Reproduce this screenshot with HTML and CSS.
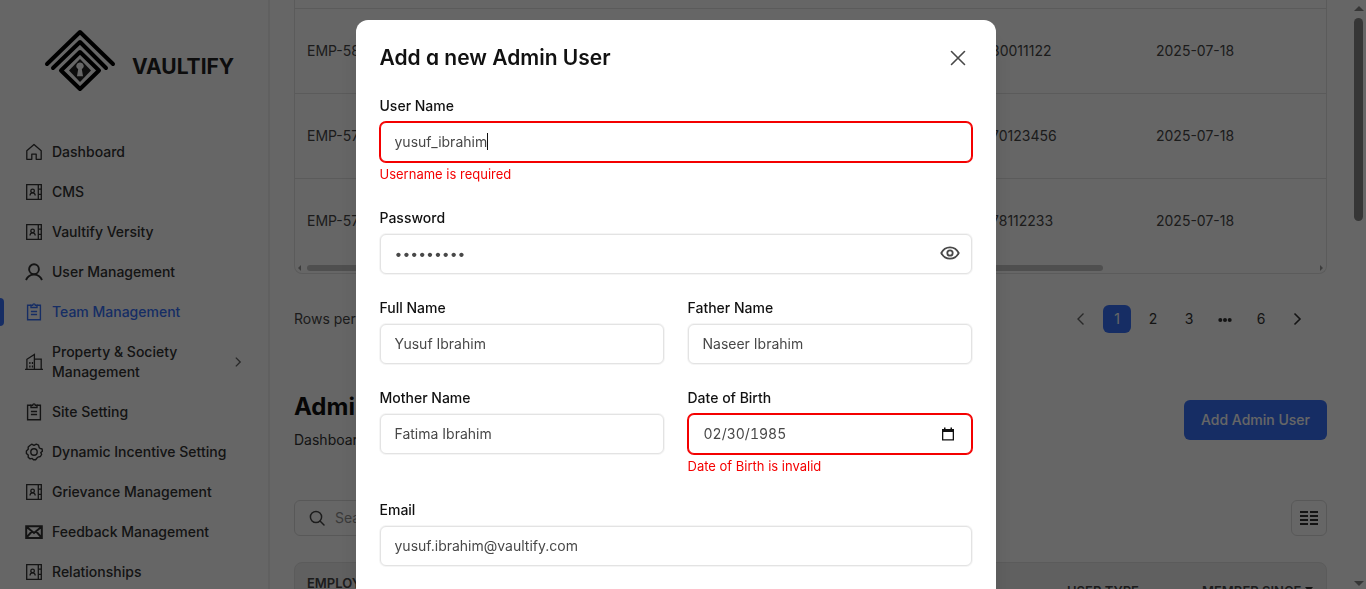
FILE: index.html
```html
<!DOCTYPE html>
<html lang="en">
<head>
<meta charset="utf-8">
<meta name="viewport" content="width=device-width, initial-scale=1">
<title>Vaultify - Team Management</title>
<link rel="stylesheet" href="styles.css">
</head>
<body>
<svg class="sprite" aria-hidden="true">
  <symbol id="home" viewBox="0 0 18 18"><path d="M1.8 7.7 9 1.4l7.2 6.3v8.6h-5v-5.2H6.8v5.2h-5z" fill="none" stroke="currentColor" stroke-width="1.3" stroke-linejoin="round"/></symbol>
  <symbol id="contact" viewBox="0 0 18 18"><g fill="none" stroke="currentColor" stroke-width="1.3"><path d="M1.7 1.7h14.6v14.6H1.7zM13.3 1.7v14.6M13.3 6.2h3M13.3 11.4h3"/><circle cx="7.6" cy="7.9" r="1.8"/><path d="M5 12.6c0-3.6 5.2-3.6 5.2 0"/></g></symbol>
  <symbol id="user" viewBox="0 0 18 18"><g fill="none" stroke="currentColor" stroke-width="1.9"><circle cx="9" cy="6.2" r="4.9"/><path d="M1 17c1.6-3.6 4.3-5.400 8-5.400s6.400 1.800 8 5.400"/></g></symbol>
  <symbol id="clipboard" viewBox="0 0 18 18"><g fill="none" stroke="currentColor" stroke-width="1.400"><path d="M6 2.300H2.600v14.500h12.800V2.300H12M5.900 8.500h6.200M5.900 11.500h6.200"/><path d="M6 4.500V2.200h1.700c.3-1.800 2.300-1.800 2.600 0H12v2.300z"/></g></symbol>
  <symbol id="building" viewBox="0 0 18 18"><g fill="none" stroke="currentColor" stroke-width="1.3"><path d="M0 16.400h18M1.900 16.400V6.300L9.400 1.500v14.900M9.400 6.100h6.800v10.300"/><path d="M4.200 10h1.300M6.800 10h1.300M4.200 13.400h1.300M6.800 13.400h1.300" stroke-width="2"/></g></symbol>
  <symbol id="gear" viewBox="0 0 18 18"><g fill="none" stroke="currentColor" stroke-width="1.400" stroke-linejoin="round"><path d="M6.700 1.200 9 2.400l2.300-1.200 2.200.9.700 2.500.800.700 2.100.700.300 2.200L15.800 9.500l.8 2-1.200 2-2.500.6-1.100 1.200-1.200 1.500H8.500L7.200 15.400l-2.100.5-1.900-1.600V12L1.400 10.400V7.900L3.200 6.300V4l1.700-1.500z"/><circle cx="9" cy="9" r="3.200"/></g></symbol>
  <symbol id="mail" viewBox="0 0 18 18"><path d="M1.200 3.300h15.600v11.600H1.200zM1.200 3.600 9 10l7.800-6.400M1.400 14.700l5.400-6.200M16.600 14.700l-5.400-6.200" fill="none" stroke="currentColor" stroke-width="2"/></symbol>
  <symbol id="right" viewBox="0 0 16 16"><path d="m5.500 3 5 5-5 5" fill="none" stroke="currentColor" stroke-width="1.600"/></symbol>
  <symbol id="left" viewBox="0 0 16 16"><path d="m10.500 2.500-5.500 5.500 5.500 5.500" fill="none" stroke="currentColor" stroke-width="1.400"/></symbol>
  <symbol id="next" viewBox="0 0 16 16"><path d="m5.500 2.500 5.500 5.500-5.500 5.500" fill="none" stroke="currentColor" stroke-width="1.600"/></symbol>
</svg>

<div class="app">
  <aside class="sidebar">
    <a class="brand" href="#">
      <svg class="brand-mark" viewBox="0 0 72 64" aria-hidden="true">
        <g fill="none" stroke="#000" stroke-width="4" stroke-linecap="round" stroke-linejoin="round">
          <path d="M3 36 36 4l33 32M9 40l27-26 26 26"/>
          <path d="M36 24 17 42.500 36 61l19-18.500z"/>
        </g>
        <path d="m36 31-11 11.500L36 54l11-11.500z"/>
        <path d="M36 34.500a3.500 3.500 0 0 1 1.800 6.600l1.200 7.200h-6l1.200-7.200a3.500 3.500 0 0 1 1.800-6.600z" fill="#fff"/>
      </svg>
      <span class="brand-name">VAULTIFY</span>
    </a>
    <nav class="nav">
      <a href="#"><svg><use href="#home"/></svg><span>Dashboard</span></a>
      <a href="#"><svg><use href="#contact"/></svg><span>CMS</span></a>
      <a href="#"><svg><use href="#contact"/></svg><span>Vaultify Versity</span></a>
      <a href="#"><svg><use href="#user"/></svg><span>User Management</span></a>
      <a href="#" class="active" aria-current="page"><svg><use href="#clipboard"/></svg><span>Team Management</span></a>
      <a href="#"><svg><use href="#building"/></svg><span>Property &amp; Society Management</span><svg class="chevron"><use href="#right"/></svg></a>
      <a href="#"><svg><use href="#clipboard"/></svg><span>Site Setting</span></a>
      <a href="#"><svg><use href="#gear"/></svg><span>Dynamic Incentive Setting</span></a>
      <a href="#"><svg><use href="#contact"/></svg><span>Grievance Management</span></a>
      <a href="#"><svg><use href="#mail"/></svg><span>Feedback Management</span></a>
      <a href="#"><svg><use href="#contact"/></svg><span>Relationships</span></a>
    </nav>
  </aside>

  <main class="main">
    <div class="team-card">
      <table class="team">
        <tbody>
          <tr><td class="col-id">EMP-58</td><td class="col-phone">30011122</td><td class="col-date">2025-07-18</td></tr>
          <tr><td>EMP-57</td><td>70123456</td><td>2025-07-18</td></tr>
          <tr><td>EMP-57</td><td>78112233</td><td>2025-07-18</td></tr>
        </tbody>
      </table>
      <div class="hscroll" aria-hidden="true">
        <i class="tri tri-left"></i><span class="htrack"><i class="hthumb"></i></span><i class="tri tri-right"></i>
      </div>
    </div>

    <div class="pager">
      <span>Rows per page</span>
      <nav class="pages" aria-label="Pagination">
        <button type="button" class="muted" aria-label="Previous page"><svg><use href="#left"/></svg></button>
        <button type="button" class="current">1</button>
        <button type="button">2</button>
        <button type="button">3</button>
        <button type="button" aria-label="More pages"><svg viewBox="0 0 16 16"><circle cx="3.300" cy="9" r="2"/><circle cx="8" cy="9" r="2"/><circle cx="12.700" cy="9" r="2"/></svg></button>
        <button type="button">6</button>
        <button type="button" aria-label="Next page"><svg><use href="#next"/></svg></button>
      </nav>
    </div>

    <header class="section-head">
      <div>
        <h1>Admin</h1>
        <a href="#" class="crumb">Dashboard</a>
      </div>
      <button type="button" class="primary">Add Admin User</button>
    </header>

    <div class="toolbar">
      <label class="search">
        <svg viewBox="0 0 16 16" aria-hidden="true"><g fill="none" stroke="currentColor" stroke-width="1.500" stroke-linecap="round"><circle cx="7" cy="7" r="5.600"/><path d="m11 11 4 4"/></g></svg>
        <input type="search" placeholder="Search" aria-label="Search">
      </label>
      <button type="button" class="columns" aria-label="Columns"><svg viewBox="0 0 20 16"><path d="M1 2h8M11 2h8M1 6h8M11 6h8M1 10h8M11 10h8M1 14h8M11 14h8" stroke="currentColor" stroke-width="1.800"/></svg></button>
    </div>

    <table class="admins">
      <thead><tr>
        <th>Employee<br>ID</th>
        <th class="col-type">User Type</th>
        <th class="col-since">Member Since <i class="sort"></i></th>
      </tr></thead>
    </table>
  </main>

  <div class="vscroll" aria-hidden="true"><i class="tri tri-up"></i><i class="vthumb"></i><i class="tri tri-down"></i></div>
</div>

<div class="overlay">
  <form class="modal" role="dialog" aria-labelledby="modal-title">
    <div class="modal-head">
      <h2 id="modal-title">Add a new Admin User</h2>
      <button type="button" class="icon-button" aria-label="Close"><svg viewBox="0 0 28 28"><path d="m7.500 7.500 13 13M20.500 7.500l-13 13" stroke="currentColor" stroke-width="1.600" stroke-linecap="round"/></svg></button>
    </div>
    <div class="field wide invalid">
      <label for="username">User Name</label>
      <div class="control">
        <input id="username" type="text" value="yusuf_ibrahim" aria-invalid="true" aria-describedby="username-error">
        <i class="caret"></i>
      </div>
      <p class="error" id="username-error">Username is required</p>
    </div>
    <div class="field wide">
      <label for="password">Password</label>
      <div class="control">
        <input id="password" type="password" value="ibrahim85">
        <button type="button" class="adornment" aria-label="Show password"><svg viewBox="0 0 20 20"><g fill="none" stroke="currentColor" stroke-width="1.800"><path d="M1.300 10C5 2.500 15 2.500 18.700 10 15 17.500 5 17.500 1.300 10z"/><circle cx="10" cy="10" r="2.700"/></g></svg></button>
      </div>
    </div>
    <div class="field">
      <label for="fullname">Full Name</label>
      <div class="control"><input id="fullname" type="text" value="Yusuf Ibrahim"></div>
    </div>
    <div class="field">
      <label for="father">Father Name</label>
      <div class="control"><input id="father" type="text" value="Naseer Ibrahim"></div>
    </div>
    <div class="field">
      <label for="mother">Mother Name</label>
      <div class="control"><input id="mother" type="text" value="Fatima Ibrahim"></div>
    </div>
    <div class="field invalid">
      <label for="dob">Date of Birth</label>
      <div class="control">
        <input id="dob" class="date" type="text" inputmode="numeric" value="02/30/1985" aria-invalid="true" aria-describedby="dob-error">
        <button type="button" class="adornment calendar" aria-label="Open calendar"><svg viewBox="0 0 14 14"><path d="M3 .5h1.500V2h5V.5H11V2h2v11.500H1V2h2zM2.300 5v7.200h9.400V5z" fill-rule="evenodd"/></svg></button>
      </div>
      <p class="error" id="dob-error">Date of Birth is invalid</p>
    </div>
    <div class="field wide">
      <label for="email">Email</label>
      <div class="control"><input id="email" type="email" value="yusuf.ibrahim@vaultify.com"></div>
    </div>
  </form>
</div>
</body>
</html>
```

FILE: styles.css
```css
* { box-sizing: border-box; }
body {
  margin: 0;
  height: 100vh;
  overflow: hidden;
  font: 14px/20px Inter, "Liberation Sans", sans-serif;
  color: #484848;
  background: #fff;
}
a { color: inherit; text-decoration: none; }
button, input { font: inherit; color: inherit; }
button { padding: 0; border: 0; background: none; display: grid; place-items: center; }
h1, h2, p { margin: 0; }
svg { display: block; fill: currentColor; }
.sprite { display: none; }

.app {
  display: grid;
  grid-template-columns: 270px minmax(0, 1fr) 15px;
  height: 100vh;
  overflow: hidden;
}

/* Sidebar */
.sidebar { border-right: 2px solid #f0f0f0; }
.brand { display: flex; align-items: center; gap: 16px; height: 132px; padding: 0 0 12px 44px; color: #222; }
.brand-mark { width: 72px; height: 64px; }
.brand-name { font-size: 21px; line-height: 28px; font-weight: 700; padding-top: 13px; }
.nav { display: flex; flex-direction: column; color: #333; font-weight: 500; }
.nav a { position: relative; display: flex; align-items: center; gap: 9px; padding: 10px 23px 10px 25px; }
.nav svg { width: 18px; height: 18px; flex: none; }
.nav span { flex: 1; }
.nav .chevron { width: 14px; height: 14px; color: #666; }
.nav .active { color: #3872fa; }
.nav .active::before {
  content: "";
  position: absolute;
  left: 0;
  top: 6px;
  width: 4px;
  height: 28px;
  border-radius: 0 4px 4px 0;
  background: #3872fa;
}

/* Main content */
.main { padding: 0 24px; overflow: hidden; }
.team-card { padding-top: 8px; border: 1px solid #e3e3e3; border-top: 0; border-radius: 0 0 8px 8px; }
table { width: 100%; border-collapse: collapse; table-layout: fixed; }
.team td { height: 85px; padding: 0 12px; border-top: 1px solid #e3e3e3; text-align: left; }
.col-id { width: 684px; }
.col-phone { width: 165px; }
.hscroll { display: flex; align-items: center; height: 9px; gap: 6px; padding: 0 3px; }
.htrack { flex: 1; }
.hthumb { display: block; width: 79%; height: 6px; border-radius: 3px; background: #c6c6c6; }
.tri { border: 3px solid transparent; }
.tri-left { border-right-color: #999; border-left: 0; }
.tri-right { border-left-color: #999; border-right: 0; }

.pager { display: flex; align-items: center; justify-content: space-between; padding: 31px 16px 0 0; }
.pages { display: flex; gap: 8px; color: #333; }
.pages button { width: 28px; height: 28px; border-radius: 6px; }
.pages svg { width: 16px; height: 16px; }
.pages .muted { color: #666; }
.pages .current { color: #fff; background: #3872fa; }

.section-head { display: flex; align-items: center; justify-content: space-between; padding-top: 58px; }
h1 { font-size: 24px; line-height: 32px; font-weight: 700; color: #111; }
.crumb { display: block; padding-top: 7px; color: #333; }
.primary { height: 40px; padding: 0 17px; border-radius: 6px; color: #fff; background: #3872fa; font-weight: 500; }

.toolbar { display: flex; justify-content: space-between; padding: 50px 0 26px; }
.search { display: flex; align-items: center; gap: 10px; width: 240px; height: 36px; padding: 0 14px; border: 1px solid #dcdcdc; border-radius: 6px; }
.search svg { width: 16px; height: 16px; flex: none; }
.search input { flex: 1; min-width: 0; padding: 0; border: 0; background: none; outline: 0; }
.search input::placeholder { color: #929292; }
.columns { width: 36px; height: 36px; border: 1px solid #dcdcdc; border-radius: 6px; color: #333; }
.columns svg { width: 20px; height: 16px; }

.admins { border: 1px solid #e3e3e3; border-radius: 8px; border-collapse: separate; border-spacing: 0; background: #f0f0f0; }
.admins th { height: 56px; padding: 0 12px; font-size: 13px; line-height: 16px; font-weight: 600; text-align: left; text-transform: uppercase; }
.admins .col-type { width: 135px; }
.admins .col-since { width: 136px; padding-right: 0; white-space: nowrap; }
.sort { display: inline-block; border: 4px solid transparent; border-top: 5px solid #333; border-bottom: 0; vertical-align: 4px; }

.vscroll { display: flex; flex-direction: column; align-items: center; padding: 6px 2px; gap: 7px; }
.tri-up { border: 5px solid transparent; border-bottom-color: #888; border-top: 0; }
.tri-down { border: 5px solid transparent; border-top-color: #888; border-bottom: 0; margin-top: auto; }
.vthumb { width: 9px; height: 35%; border-radius: 5px; background: #888; }

/* Modal */
.overlay {
  position: fixed;
  inset: 0;
  display: flex;
  justify-content: center;
  align-items: flex-start;
  padding: 20px 15px 0 0;
  overflow: hidden;
  background: rgba(0, 0, 0, 0.6);
}
.modal {
  display: grid;
  grid-template-columns: 1fr 1fr;
  gap: 24px;
  align-items: start;
  width: 100%;
  max-width: 640px;
  padding: 24px 24px 96px;
  border-radius: 12px;
  background: #fff;
  box-shadow: 0 20px 25px rgba(0, 0, 0, 0.1);
}
.modal-head, .wide { grid-column: 1 / -1; }
.modal-head { display: flex; align-items: center; justify-content: space-between; }
h2 { font-size: 21px; line-height: 28px; font-weight: 600; font-feature-settings: "cv11"; color: #111; }
.icon-button, .icon-button svg { width: 28px; height: 28px; }
.field label { display: block; margin-bottom: 6px; font-weight: 500; color: #111; }
.control { position: relative; }
.control input {
  display: block;
  width: 100%;
  height: 40px;
  padding: 0 14px 2px;
  border: 1px solid #e3e3e3;
  border-radius: 6px;
  background: #fff;
  box-shadow: 0 0 0 1px #f5f5f5;
  outline: 0;
}
.invalid input { border-color: #f40000; box-shadow: 0 0 0 1px #f40000; }
.control .date { padding-left: 15px; font-variant-numeric: tabular-nums; }
.error { padding-top: 2px; font-size: 13px; line-height: 20px; color: #f40000; }
.caret { position: absolute; left: 107px; top: 11px; width: 1px; height: 17px; background: #111; }
.adornment { position: absolute; right: 12px; top: 0; width: 20px; height: 38px; }
.adornment svg { width: 20px; height: 20px; }
.calendar { right: 14px; height: 40px; color: #111; }
.calendar svg { width: 14px; height: 14px; }
```
